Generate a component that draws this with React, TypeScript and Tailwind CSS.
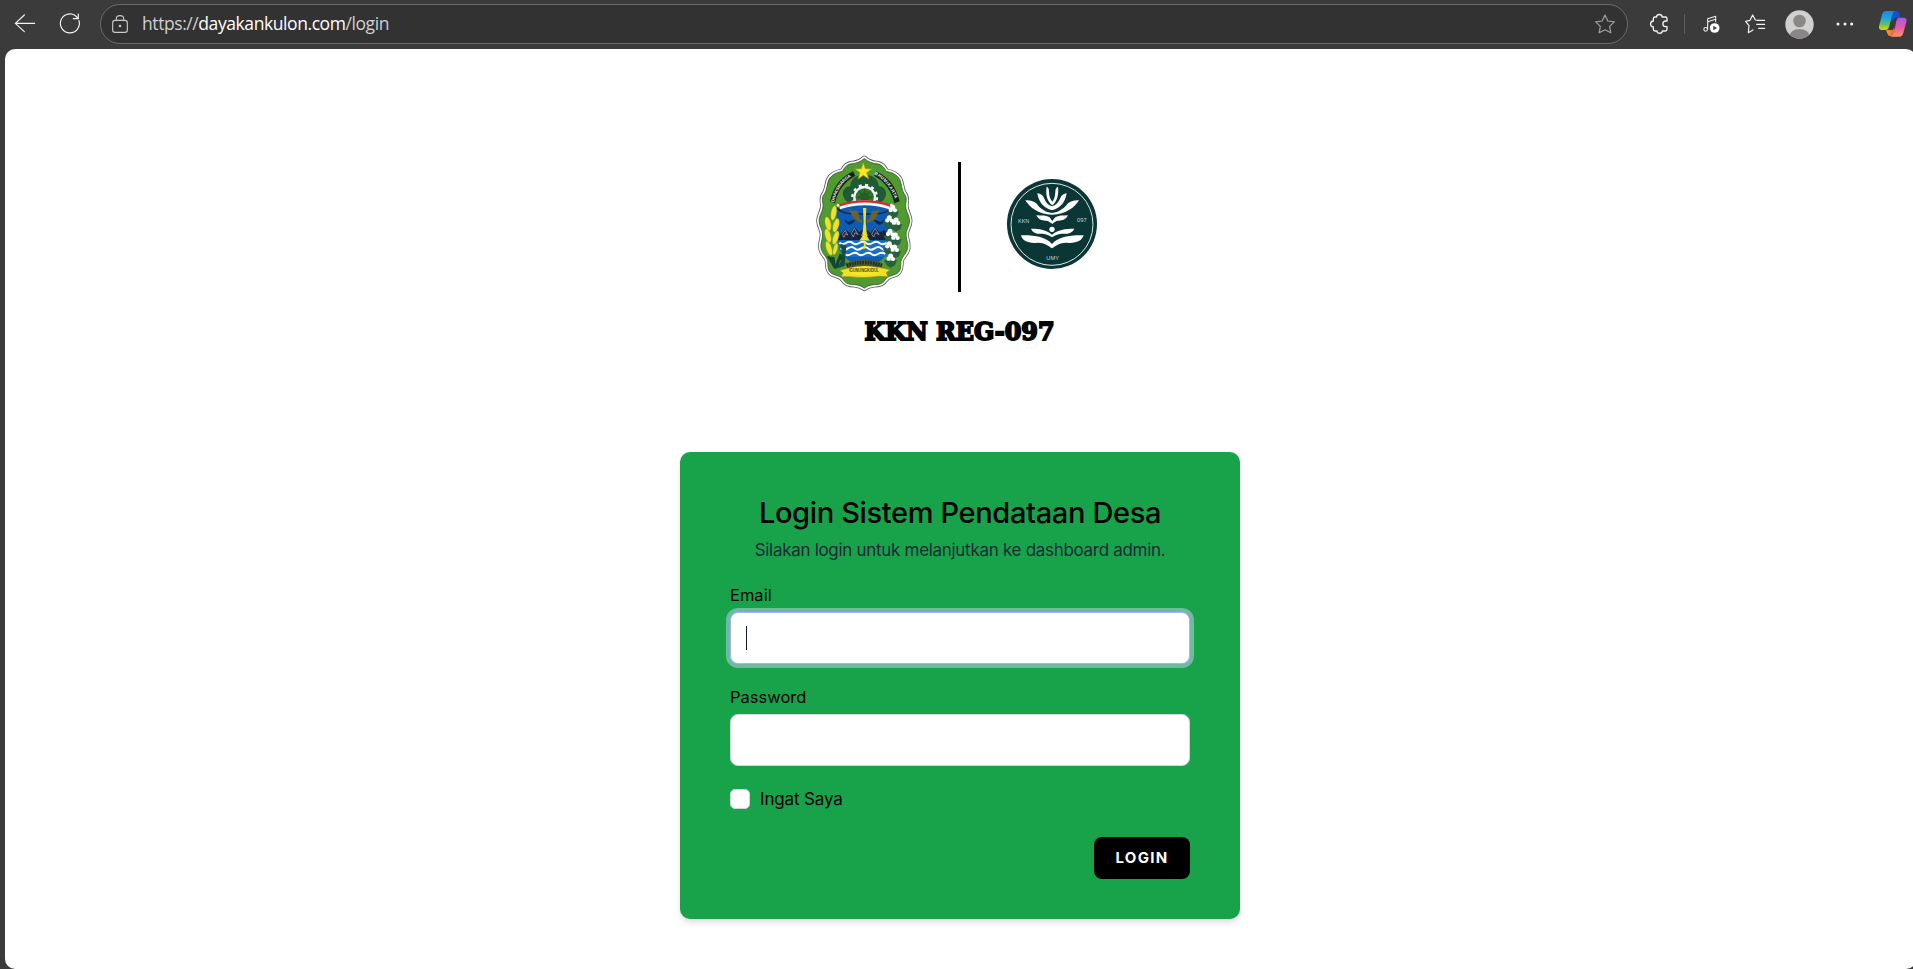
import React from "react";

const BackIcon = () => (
  <svg className="h-[23px] w-[24px] shrink-0" viewBox="39 37 72 69" fill="none" stroke="#f2f2f2" strokeWidth="3.6" strokeLinecap="round" strokeLinejoin="round">
    <path d="M104 71H46M73 46L46 71L73 96" />
  </svg>
);

const ReloadIcon = () => (
  <svg className="h-[23px] w-[24px] shrink-0" viewBox="174 37 72 69" fill="none" stroke="#f2f2f2" strokeWidth="3.6" strokeLinecap="round" strokeLinejoin="round">
    <path d="M237 63A28.5 28.5 0 1 1 225 47L233 55M235 43V57H220" />
  </svg>
);

const LockIcon = () => (
  <svg className="h-[20px] w-[18px] shrink-0" viewBox="333 40 54 60" fill="none" stroke="#c9c9c9" strokeWidth="3.4">
    <rect x="338" y="59" width="44" height="36" rx="7" />
    <path d="M349 59V54C349 42 371 42 371 54V59" />
    <circle cx="360" cy="76" r="4" fill="#c9c9c9" stroke="none" />
  </svg>
);

const StarIcon = () => (
  <svg className="h-[22px] w-[22px] shrink-0" viewBox="102 40 66 66" fill="none" stroke="#a2a2a2" strokeWidth="3.5" strokeLinejoin="round">
    <path d="M135 46L143.500 64L163 66.500L149 80L152.500 99.500L135 90L117.500 99.500L121 80L107 66.500L126.500 64Z" />
  </svg>
);

const PuzzleIcon = () => (
  <svg className="h-[22px] w-[20px] shrink-0" viewBox="268 39 60 66" fill="none" stroke="#f2f2f2" strokeWidth="4" strokeLinejoin="round">
    <path d="M286 51H291C289 41 309 41 307 51H317Q322 51 322 56V63H318C307 63 307 80 318 80H322V88Q322 93 317 93H308C308 102 291 102 292 93H286Q281 93 281 88V81C270 80 270 64 281 63V56Q281 51 286 51Z" />
  </svg>
);

const MediaIcon = () => (
  <svg className="h-[20px] w-[19px] shrink-0" viewBox="425 43 57 60" fill="none" stroke="#f2f2f2" strokeWidth="3.2" strokeLinejoin="round">
    <path d="M442 89V57L466 50V68M442 66L466 59" />
    <circle cx="436" cy="89" r="5.500" />
    <circle cx="463" cy="85" r="14.500" fill="#fff" stroke="none" />
    <path d="M459 78L470 85L459 92Z" fill="#3b3b3b" stroke="none" />
  </svg>
);

const FavoritesIcon = () => (
  <svg className="h-[22px] w-[22px] shrink-0" viewBox="552 40 66 66" fill="none" stroke="#f2f2f2" strokeWidth="3.6" strokeLinejoin="round" strokeLinecap="round">
    <path d="M596 62L586 61L578 46L570 62L557 65L567 78L565 99L579 91" />
    <path d="M594 62H614M590 74H614M596 86H614" />
  </svg>
);

const Avatar = () => (
  <svg className="h-[29px] w-[29px] shrink-0" viewBox="0 0 29 29">
    <defs>
      <clipPath id="face"><circle cx="14.500" cy="14.500" r="14.200" /></clipPath>
    </defs>
    <circle cx="14.500" cy="14.500" r="14.200" fill="#d2d0ce" />
    <g clipPath="url(#face)" fill="#8a8886">
      <circle cx="14.500" cy="11" r="6.300" />
      <ellipse cx="14.500" cy="26" rx="10" ry="7" />
    </g>
  </svg>
);

const MoreIcon = () => (
  <svg className="h-[4px] w-[18px] shrink-0" viewBox="828 65 54 12" fill="#f2f2f2">
    <circle cx="834" cy="71" r="4.500" />
    <circle cx="855" cy="71" r="4.500" />
    <circle cx="875" cy="71" r="4.500" />
  </svg>
);

const CopilotIcon = () => (
  <svg className="h-[28px] w-[30px] shrink-0" viewBox="955 30 90 84">
    <defs>
      <linearGradient id="cpA" x1="0" y1="0" x2="0" y2="1">
        <stop offset="0" stopColor="#1686ee" />
        <stop offset=".4" stopColor="#20a8dd" />
        <stop offset=".7" stopColor="#62c25a" />
        <stop offset="1" stopColor="#f2cc10" />
      </linearGradient>
      <linearGradient id="cpB" x1="0" y1="0" x2="0" y2="1">
        <stop offset="0" stopColor="#a45bea" />
        <stop offset=".5" stopColor="#e958a6" />
        <stop offset="1" stopColor="#fd9360" />
      </linearGradient>
      <linearGradient id="cpC" x1="0" y1="0" x2="1" y2="0">
        <stop offset="0" stopColor="#f6a02c" />
        <stop offset="1" stopColor="#f04a3c" />
      </linearGradient>
    </defs>
    <path d="M998 33H1010Q1017 33 1019 41L1022 53H1008Q1001 53 999 61L994 70Z" fill="#1650cf" />
    <path d="M979 90H999L1003 83L1012 109H993Q986 109 984 102Z" fill="url(#cpC)" />
    <path d="M979 33H1006Q1000 36 997 46L989 78Q986 90 977 90H965Q956 89 958 79L967 44Q970 33 979 33Z" fill="url(#cpA)" />
    <path d="M1019 53H1034Q1043 55 1040 65L1031 99Q1028 110 1019 110H994Q1000 107 1003 97L1010 63Q1013 53 1019 53Z" fill="url(#cpB)" />
  </svg>
);

const bodyPath =
  "M193 49C181 60 166 65 150 66C138 68 130 79 125 89C109 92 91 99 83 114C76 128 78 145 70 157C62 166 61 176 64 190C67 212 52 224 52 243C52 262 65 270 63 290C61 308 54 318 60 335C65 350 76 354 79 369C80 383 78 399 91 407C105 415 119 413 128 427C135 440 149 442 163 442C177 443 185 447 193 453C201 447 209 443 223 442C237 442 251 440 258 427C267 413 281 415 295 407C308 399 306 383 307 369C310 354 321 350 326 335C332 318 325 308 323 290C321 270 334 262 334 243C334 224 319 212 322 190C325 176 324 166 316 157C308 145 310 128 303 114C295 99 277 92 261 89C256 79 248 68 236 66C220 65 205 60 193 49Z";

const Wheat = () => (
  <g fill="#f0e22c" stroke="#8a9a22" strokeWidth="1">
    <ellipse cx="101" cy="219" rx="8" ry="22" transform="rotate(10 101 219)" />
    <ellipse cx="84" cy="251" rx="8.500" ry="21" transform="rotate(-12 84 251)" />
    <ellipse cx="108" cy="256" rx="8.500" ry="21" transform="rotate(16 108 256)" />
    <ellipse cx="84" cy="287" rx="8.500" ry="21" transform="rotate(-16 84 287)" />
    <ellipse cx="107" cy="293" rx="8" ry="21" transform="rotate(18 107 293)" />
    <ellipse cx="87" cy="325" rx="8" ry="22" transform="rotate(-18 87 325)" />
    <ellipse cx="106" cy="327" rx="6" ry="18" transform="rotate(16 106 327)" />
  </g>
);

const cotton: [number, number][] = [
  [278, 207], [268, 238], [288, 245], [270, 279], [286, 290], [268, 316], [284, 326], [272, 353],
];

const RegencyEmblem = () => (
  <svg className="h-[160px] w-[130px] shrink-0" viewBox="0 0 390 480">
    <g transform="translate(193 250) scale(.963) translate(-193 -251)">
      <path d={bodyPath} fill="none" stroke="#5a5a5a" strokeWidth="18" strokeLinejoin="round" />
      <path d={bodyPath} fill="#519a2f" stroke="#ffffff" strokeWidth="13" strokeLinejoin="round" />
      <path d={bodyPath} fill="#519a2f" stroke="#35552b" strokeWidth="2.500" />
    </g>
    <path d="M193 105C169 103 151 117 151 139C132 139 123 158 132 173C138 187 153 192 170 190H217C234 192 249 187 255 173C264 158 254 139 236 139C236 117 216 103 193 105Z" fill="#1f5a35" />
    <circle cx="194" cy="172" r="31" fill="#2e7435" stroke="#f3f6f3" strokeWidth="7" />
    <circle cx="194" cy="172" r="37" fill="none" stroke="#f3f6f3" strokeWidth="7" strokeDasharray="9 10.400" />
    <path d="M194 144L199 162L212 152L204 168L222 170L204 177L208 190H180L184 177L166 170L184 168L176 152L189 162Z" fill="#265c24" />
    <path d="M90 184C99 143 121 112 159 94L166 107C133 125 113 153 105 190Z" fill="#14231a" />
    <path d="M299 184C289 143 267 112 229 94L222 107C255 125 275 153 283 190Z" fill="#14231a" />
    <path id="mottoLeft" d="M102 187C109 150 130 121 164 103" fill="none" />
    <path id="mottoRight" d="M223 103C257 121 278 150 287 187" fill="none" />
    <g fontFamily="Liberation Sans, sans-serif" fontWeight="700" fontSize="13" fill="#f2f2f2">
      <text><textPath href="#mottoLeft" textLength="96">DHAKSINARGA</textPath></text>
      <text><textPath href="#mottoRight" textLength="98">BHUMIKARTA</textPath></text>
    </g>
    <path d="M190 68L196 86L215 87L200 98L206 117L190 106L174 117L180 98L165 87L184 86Z" fill="#f9e91e" stroke="#a49b1d" strokeWidth="2" />
    <path d="M110 204C160 188 228 188 276 204L277 260C278 315 263 351 228 371H160C125 351 109 315 110 260Z" fill="#0d5bb2" />
    <path d="M110 204C130 224 160 222 193 222C226 222 256 224 276 204" fill="none" stroke="#18283c" strokeWidth="4" />
    <path d="M146 205C157 216 168 209 174 216C179 225 172 236 187 240L186 250C170 243 160 238 154 222ZM240 205C230 216 220 209 214 216C209 225 216 236 200 240L202 250C218 243 228 238 232 222Z" fill="#6b6230" />
    <path d="M133 237L145 246L157 241L167 239L158 250L148 255L138 248ZM254 237L242 246L230 241L220 239L229 250L239 255L249 248Z" fill="#10284c" />
    <path d="M114 300L121 282L136 268L150 279L163 262L178 277L194 264L211 280L224 262L239 277L254 270L274 300Z" fill="#17243f" />
    <path d="M127 283L136 271L143 285L137 281L132 292ZM154 281L163 265L174 284L165 278L160 291ZM215 283L225 265L237 284L227 278L221 291ZM184 288L193 268L204 288" fill="none" stroke="#b3bac5" strokeWidth="2" />
    <path d="M189 204H199L197 246L201 289L210 302H178L187 289L191 246Z" fill="#ece02a" />
    <path d="M113 302H276L270 330L259 350H128L118 330Z" fill="#1870c2" />
    <g fill="none" stroke="#ffffff" strokeWidth="6">
      <path d="M118 308Q126 316 138 309T158 309T178 309T198 309T218 309T238 309T260 309" />
      <path d="M122 325Q132 333 144 325T164 325T184 325T204 325T224 325T244 325T262 325" />
      <path d="M132 342Q142 349 154 342T174 342T194 342T214 342T234 342T256 342" />
    </g>
    <path d="M191 305H197V323Q192 330 187 325L192 321Z" fill="#f0e22c" />
    <path d="M134 370Q193 350 249 370L241 388Q193 375 145 388Z" fill="#55562d" />
    <path d="M140 377Q193 358 246 377" fill="none" stroke="#22331d" strokeWidth="10" strokeDasharray="5 3" />
    <path d="M80 348L104 352L106 373L119 341L128 345L130 362L120 361L117 378Q106 398 96 375Z" fill="#154632" />
    <path d="M121 311L139 317L134 377L113 385L128 350Z" fill="#174b42" />
    {cotton.map(([x, y]) => (
      <g key={`${x}-${y}`}>
        <path d={`M${x - 20} ${y + 8}L${x - 8} ${y + 6}L${x + 2} ${y + 10}L${x + 19} ${y + 7}L${x + 13} ${y + 23}L${x} ${y + 30}L${x - 12} ${y + 23}Z`} fill="#285f40" />
        <g fill="#ffffff">
          <circle cx={x - 6} cy={y + 3} r="6.500" />
          <circle cx={x + 7} cy={y + 4} r="6" />
          <circle cx={x} cy={y - 5} r="7.500" />
        </g>
      </g>
    ))}
    <Wheat />
    <path d="M117 195Q193 168 271 195L268 208Q193 184 120 208Z" fill="#ffffff" />
    <path d="M116 193Q193 168 272 193L270 200Q193 175 118 200Z" fill="#d72b31" />
    <circle cx="114" cy="196" r="4" fill="#fff" />
    <circle cx="274" cy="195" r="4" fill="#fff" />
    <path d="M119 391L149 383V394Q193 403 238 382L270 389L259 398L264 410L238 409Q193 416 148 410L123 410L129 399Z" fill="#f0df27" stroke="#877e20" strokeWidth="1.500" />
    <path d="M150 383Q193 373 238 383V400Q193 412 150 400Z" fill="#f6e62a" />
    <text x="149" y="397" textLength="88" lengthAdjust="spacingAndGlyphs" fontFamily="Liberation Sans, sans-serif" fontWeight="700" fontSize="14" fill="#4d4912">GUNUNGKIDUL</text>
  </svg>
);

const KknEmblem = () => (
  <svg className="h-[92px] w-[92px] shrink-0" viewBox="200 82 276 276">
    <circle cx="338" cy="220" r="135" fill="#0b3636" />
    <circle cx="338" cy="221" r="123" fill="none" stroke="#dfe6e4" strokeWidth="3" />
    <g fill="#ffffff">
      <path d="M258 149C269 147 281 151 291 158C302 174 318 185 338 187C358 185 374 174 386 158C396 151 408 147 419 149C407 169 381 191 338 192C296 191 270 169 258 149Z" />
      <path d="M294 128C304 129 311 134 314 142C319 155 327 164 338 167C349 164 358 155 363 142C366 134 373 129 382 128C379 151 365 173 338 179C312 173 297 151 294 128Z" />
      <path d="M322 108C327 110 329 115 329 122C329 135 332 146 339 153C345 146 348 135 348 122C348 115 351 110 356 108C359 132 353 153 339 164C324 153 318 132 322 108Z" />
      <path d="M291 194C308 195 322 194 331 200C334 204 336 208 339 211C342 208 344 204 348 200C357 194 370 195 386 194C380 207 366 211 355 210C348 212 343 216 339 220C334 216 329 212 322 210C310 211 297 207 291 194Z" />
      <circle cx="338" cy="236" r="8" />
      <path d="M275 234C301 234 321 237 338 252C355 237 377 234 405 234C399 248 383 251 366 249C355 250 347 254 338 260C330 254 321 250 311 249C295 251 281 248 275 234Z" />
      <path d="M245 254C283 253 318 257 338 280C358 257 394 253 433 254C428 272 407 279 382 276C364 275 350 284 338 293C326 284 312 275 295 276C270 279 249 272 245 254Z" />
    </g>
    <g fontFamily="Liberation Sans, sans-serif" fontSize="17" fill="#c9d5d2">
      <text x="236" y="216" textLength="34" lengthAdjust="spacingAndGlyphs">KKN</text>
      <text x="413" y="215" textLength="29" lengthAdjust="spacingAndGlyphs">097</text>
      <text x="321" y="329" textLength="38" lengthAdjust="spacingAndGlyphs">UMY</text>
    </g>
  </svg>
);

const Toolbar = () => (
  <header className="flex h-[49px] shrink-0 items-start bg-[#3b3b3b]">
    <div className="flex h-[47px] items-center gap-[21px] pl-[13px]">
      <BackIcon />
      <ReloadIcon />
    </div>
    <div className="ml-[18px] mt-[4px] flex h-[40px] w-[1528px] items-center rounded-full border border-[#6c6c6c] bg-[#323232] pl-[10px] pr-[11px]">
      <LockIcon />
      <span className="mb-px ml-[13px] whitespace-nowrap font-['Open_Sans',sans-serif] text-[17.5px] tracking-[-0.42px] text-[#cfcfcf]">
        https://<span className="text-white">dayakankulon.com</span>/login
      </span>
      <div className="ml-auto"><StarIcon /></div>
    </div>
    <div className="flex h-[48px] items-center">
      <div className="ml-[21px]"><PuzzleIcon /></div>
      <div className="ml-[15px] h-[20px] w-px bg-[#5e5e5e]" />
      <div className="ml-[17px]"><MediaIcon /></div>
      <div className="ml-[23px]"><FavoritesIcon /></div>
      <div className="ml-[19px]"><Avatar /></div>
      <div className="ml-[22px]"><MoreIcon /></div>
      <div className="ml-[24px]"><CopilotIcon /></div>
    </div>
  </header>
);

export default function App() {
  return (
    <div className="flex h-[969px] w-[1913px] flex-col overflow-hidden bg-[#3b3b3b] font-['Inter',sans-serif] text-black">
      <Toolbar />
      <main className="-mr-[3px] ml-[5px] flex min-h-0 w-[1911px] flex-1 flex-col rounded-[10px] bg-white">
        <div className="ml-[795px] mt-[91px] flex h-[160px] items-start">
          <RegencyEmblem />
          <div className="ml-[28px] mt-[22px] h-[130px] w-[2.5px] bg-black" />
          <div className="ml-[45.5px] mt-[38px]"><KknEmblem /></div>
        </div>
        <div className="ml-[853px] mt-[9px] h-[44px] w-[206px]">
          <svg className="h-[44px] w-[206px]" viewBox="0 0 206 44">
            <text x="6.5" y="31.3" textLength="190" lengthAdjust="spacingAndGlyphs" fontFamily="DejaVu Serif, serif" fontWeight="700" fontSize="25" stroke="#000" strokeWidth="1.9">KKN REG-097</text>
          </svg>
        </div>
        <form className="ml-[675px] mt-[99px] h-[467px] w-[560px] rounded-[10px] bg-[#18a34a] px-[50px] pt-[41px] shadow-[0_5px_7px_-1px_rgba(0,0,0,0.1),0_2px_5px_-2px_rgba(0,0,0,0.1)]">
          <h1 className="h-[40px] whitespace-nowrap text-center text-[29px] font-medium leading-[39px] tracking-[-0.35px]">Login Sistem Pendataan Desa</h1>
          <p className="mt-[5px] h-[25px] whitespace-nowrap text-center text-[17px] leading-[25px] tracking-[-0.3px] text-[#1f2937]">Silakan login untuk melanjutkan ke dashboard admin.</p>
          <label className="mt-[20px] block h-[25px] text-[16.5px] leading-[25px]">Email</label>
          <div className="mt-[4px] flex h-[52px] items-center rounded-[8px] border border-[#a5b4fc] bg-white pl-[15px] shadow-[0_0_0_4px_rgba(199,210,254,0.5)]">
            <div className="h-[24px] w-px bg-[#111827]" />
          </div>
          <label className="mt-[21px] block h-[25px] text-[16.5px] leading-[25px]">Password</label>
          <div className="mt-[4px] h-[52px] rounded-[8px] border border-[#d1d5db] bg-white" />
          <div className="mt-[20px] flex h-[25px] items-center">
            <div className="mt-[1px] h-[20px] w-[20px] rounded-[5px] border border-[#d1d5db] bg-white" />
            <span className="ml-[10px] mt-[2px] text-[17px] leading-[25px] tracking-[-0.15px]">Ingat Saya</span>
          </div>
          <div className="mt-[26px] flex justify-end">
            <button type="button" className="h-[42px] w-[96px] rounded-[8px] bg-black text-[15px] font-bold tracking-[1.3px] text-white">LOGIN</button>
          </div>
        </form>
      </main>
    </div>
  );
}
